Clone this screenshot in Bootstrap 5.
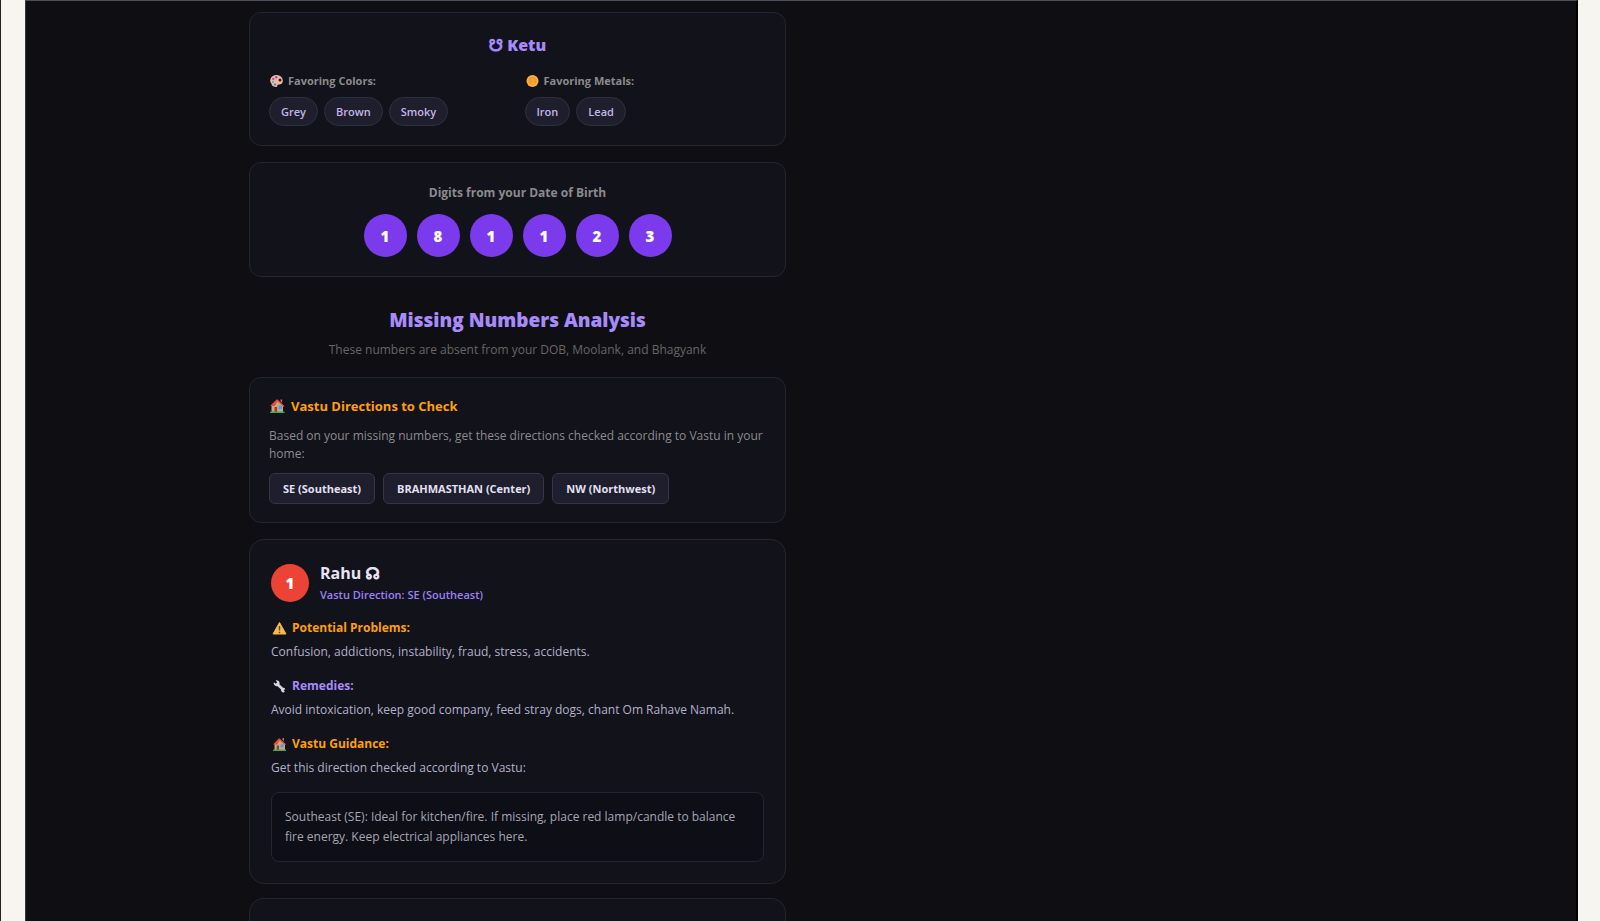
<!DOCTYPE html>
<html lang="en">
<head>
<meta charset="utf-8">
<meta name="viewport" content="width=device-width, initial-scale=1">
<title>Missing Numbers Analysis</title>
<link href="https://cdn.jsdelivr.net/npm/bootstrap@5.3.0/dist/css/bootstrap.min.css" rel="stylesheet">
<style>
  :root { --violet: #a78bfa; --amber: #ff9f0a; --panel: #12121b; --line: #252532; }
  body { background: #f7f5f0; font-family: "Open Sans", "Noto Sans", sans-serif; font-size: 12px; line-height: 20px; color: #b4b0c8; border-left: 1px solid #2b2118; }
  .stage { min-height: 100vh; margin: 0 22px 0 24px; background: #0f0f13; border-top: 1px solid #4a4f59; border-left: 1px solid #3a3a3e; border-right: 2px solid #000; }
  .report { width: 100%; max-width: 1104px; padding-top: 11px; }
  .report > .row { --bs-gutter-x: 30px; }
  .panel { background: var(--panel); border: 1px solid var(--line); border-radius: 12px; padding: 19px; margin-bottom: 16px; }
  .panel-digits { padding-top: 23px; }
  .panel-check { padding-bottom: 18px; }
  .panel-lg { border-radius: 15px; padding: 21px; margin-bottom: 14px; }
  .panel-next { margin-bottom: 0; border-bottom: 0; border-radius: 15px 15px 0 0; }
  h2, h3, h4, p { margin: 0; }
  svg { display: block; flex: none; }
  .glyph { font-family: "DejaVu Sans", sans-serif; font-weight: 700; font-size: 16px; -webkit-text-stroke: 1px currentColor; }
  .planet { font-size: 16px; line-height: 26px; font-weight: 800; color: var(--violet); margin-bottom: 13px; }
  .traits { display: grid; grid-template-columns: 1fr 1fr; gap: 14px; }
  .trait { font-size: 11px; line-height: 18px; font-weight: 700; color: #8b8b8b; gap: 4px; margin-bottom: 7px; }
  .chip { font-size: 11px; line-height: 17px; font-weight: 600; color: #c4b5e8; background: #1e1e2d; border: 1px solid #2f2f40; border-radius: 15px; padding: 5px 11px; }
  .chips { gap: 6px; }
  .digits-title { font-size: 12px; font-weight: 700; color: #8b8b8b; margin-bottom: 14px; }
  .digit { width: 43px; height: 43px; font-size: 15px; font-weight: 800; color: #fff; background: #7c3aed; }
  .digits { gap: 10px; }
  .section-title { font-size: 19px; line-height: 30px; font-weight: 800; color: var(--violet); margin: 28px 0 5px; }
  .section-note { color: #666; margin-bottom: 17px; }
  .check-title { font-size: 13px; line-height: 18px; font-weight: 700; color: var(--amber); gap: 6px; margin-bottom: 12px; }
  .check-text { line-height: 18px; color: #8b8b8b; margin-bottom: 10px; }
  .direction { font-size: 11px; line-height: 19px; font-weight: 700; color: #e5e0f5; background: #1e1e2d; border: 1px solid #35354a; border-radius: 6px; padding: 5px 13px; }
  .head { gap: 11px; }
  .head-badge { width: 38px; height: 38px; font-size: 15px; font-weight: 800; color: #fff; background: #eb4335; }
  .head-name { font-size: 16px; line-height: 24px; font-weight: 700; color: #e8e4f3; }
  .head-dir { font-size: 11px; line-height: 18px; font-weight: 600; color: #9b80f5; }
  .topic { font-size: 12px; line-height: 18px; font-weight: 700; color: var(--amber); gap: 5px; margin: 15px 0 5px; }
  .topic-violet { color: var(--violet); }
  .advice { color: #a5a5b4; background: #0e0e16; border: 1px solid var(--line); border-radius: 8px; padding: 14px 13px; margin-top: 14px; }
</style>
</head>
<body>
<div class="stage d-flex">
  <main class="report mx-auto d-flex">
    <div class="row flex-grow-1">
      <div class="col-6 d-flex flex-column">

        <section class="panel">
          <h3 class="planet text-center"><span class="glyph">☋</span> Ketu</h3>
          <div class="traits">
            <div>
              <h4 class="trait d-flex align-items-center">
                <svg width="15" height="14" viewBox="0 0 15 14" aria-hidden="true"><path d="M8 1C4 .8 1.2 3.500 1.200 7c0 1.500 1.300 1.900 1.300 3.100C2.600 12 5 13 7.200 13c1.200 0 1-.9 1.200-1.700.4-1 1.600-.7 3-1.100C13 9.800 14 8.400 13.800 6.200 13.400 3 11 1.100 8 1z" fill="#f3b8a4"/><circle cx="11" cy="6" r="1.500" fill="#2b2030"/><circle cx="7.200" cy="3.200" r="1.200" fill="#8b4fd0"/><circle cx="4.300" cy="5" r="1.200" fill="#e0459b"/><circle cx="4" cy="8" r="1.100" fill="#3fb8d0"/><circle cx="6" cy="10.500" r="1.300" fill="#3a9ad8"/></svg>
                Favoring Colors:
              </h4>
              <div class="chips d-flex flex-wrap"><span class="chip">Grey</span><span class="chip">Brown</span><span class="chip">Smoky</span></div>
            </div>
            <div>
              <h4 class="trait d-flex align-items-center">
                <svg width="15" height="14" viewBox="0 0 15 14" aria-hidden="true"><circle cx="7.500" cy="7" r="6" fill="#fbb040"/><circle cx="7.500" cy="7" r="4.300" fill="#f39a2d"/><path d="M6.500 5.200l1.500-.9v5.200M6 9.700h4" fill="none" stroke="#fbb040"/></svg>
                Favoring Metals:
              </h4>
              <div class="chips d-flex flex-wrap"><span class="chip">Iron</span><span class="chip">Lead</span></div>
            </div>
          </div>
        </section>

        <section class="panel panel-digits mb-0">
          <h3 class="digits-title text-center">Digits from your Date of Birth</h3>
          <div class="digits d-flex justify-content-center">
            <span class="digit rounded-circle d-flex align-items-center justify-content-center">1</span>
            <span class="digit rounded-circle d-flex align-items-center justify-content-center">8</span>
            <span class="digit rounded-circle d-flex align-items-center justify-content-center">1</span>
            <span class="digit rounded-circle d-flex align-items-center justify-content-center">1</span>
            <span class="digit rounded-circle d-flex align-items-center justify-content-center">2</span>
            <span class="digit rounded-circle d-flex align-items-center justify-content-center">3</span>
          </div>
        </section>

        <h2 class="section-title text-center">Missing Numbers Analysis</h2>
        <p class="section-note text-center">These numbers are absent from your DOB, Moolank, and Bhagyank</p>

        <section class="panel panel-check">
          <h3 class="check-title d-flex align-items-center">
            <svg width="16" height="16" viewBox="0 0 16 16" aria-hidden="true"><path d="M2.500 7L9 2.500l5 5V14H2.500z" fill="#d9a07a"/><path d="M7.500 1.500h1L15.500 8l-.9.900L8.400 3.500 5.800 8H1z" fill="#e0503c"/><path d="M11.500 1.500h1.600v3.200l-1.600-1.400z" fill="#b9745a"/><path d="M5.500 9h2.600v5H5.500z" fill="#7c4a38"/><path d="M9.600 7.800h3.500v3.400H9.600z" fill="#3ea6f0"/><path d="M1 13.600h14.500V15H1z" fill="#2fae5f"/></svg>
            Vastu Directions to Check
          </h3>
          <p class="check-text">Based on your missing numbers, get these directions checked according to Vastu in your home:</p>
          <div class="d-flex flex-wrap gap-2"><span class="direction">SE (Southeast)</span><span class="direction">BRAHMASTHAN (Center)</span><span class="direction">NW (Northwest)</span></div>
        </section>

        <section class="panel panel-lg">
          <div class="head d-flex align-items-center">
            <span class="head-badge rounded-circle d-flex align-items-center justify-content-center">1</span>
            <div>
              <h3 class="head-name">Rahu <span class="glyph">☊</span></h3>
              <p class="head-dir">Vastu Direction: SE (Southeast)</p>
            </div>
          </div>

          <h4 class="topic d-flex align-items-center">
            <svg width="16" height="16" viewBox="0 0 16 16" aria-hidden="true"><path d="M8.500 2.500L15 14H2z" fill="#f8b84e" stroke="#f8b84e" stroke-linejoin="round"/><path d="M8.500 6v4.600M8.500 11.800v1.400" stroke="#5b4030" stroke-width="1.400"/></svg>
            Potential Problems:
          </h4>
          <p>Confusion, addictions, instability, fraud, stress, accidents.</p>

          <h4 class="topic topic-violet d-flex align-items-center">
            <svg width="16" height="16" viewBox="0 0 16 16" aria-hidden="true"><path d="M5.500 5.500l6.800 6.300" stroke="#d9d4e2" stroke-width="2.600"/><path d="M4.800 2.300a3 3 0 1 1-2 2l2 1.500 1.300-1.200z" fill="#d9d4e2"/><path d="M13.800 13.800a2.200 2.200 0 1 1 .5-2.500l-1.600.7z" fill="#d9d4e2"/></svg>
            Remedies:
          </h4>
          <p>Avoid intoxication, keep good company, feed stray dogs, chant Om Rahave Namah.</p>

          <h4 class="topic d-flex align-items-center">
            <svg width="16" height="16" viewBox="0 0 16 16" aria-hidden="true"><path d="M3.500 8L9 3.500l5 4.500v6H3.500z" fill="#d9a07a"/><path d="M7.700 2.500h1L15 8.200l-.9.800-5.600-4.600L6.200 8.500H2z" fill="#e0503c"/><path d="M11.500 2h1.500v3.200l-1.500-1.400z" fill="#b9745a"/><path d="M5.700 9.500h2.300V14H5.700z" fill="#7c4a38"/><path d="M9.600 8.300h3.200v3H9.600z" fill="#3ea6f0"/><path d="M2 13.600h13V15H2z" fill="#2fae5f"/></svg>
            Vastu Guidance:
          </h4>
          <p>Get this direction checked according to Vastu:</p>
          <p class="advice">Southeast (SE): Ideal for kitchen/fire. If missing, place red lamp/candle to balance fire energy. Keep electrical appliances here.</p>
        </section>

        <section class="panel panel-lg panel-next flex-grow-1 py-0"></section>
      </div>
    </div>
  </main>
</div>
<script src="https://cdn.jsdelivr.net/npm/bootstrap@5.3.0/dist/js/bootstrap.bundle.min.js"></script>
</body>
</html>
